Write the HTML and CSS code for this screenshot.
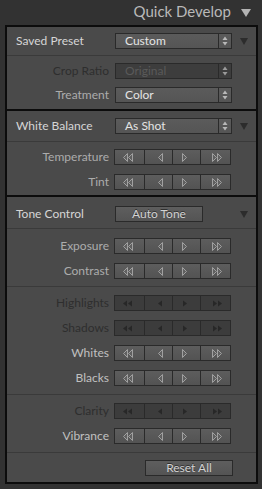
FILE: index.html
```html
<!DOCTYPE html>
<html>
<head>
<meta charset="utf-8">
<link rel="stylesheet" href="styles.css">
</head>
<body>
<svg class="sprite" aria-hidden="true">
  <defs>
    <symbol id="ell" viewBox="0 0 11 9"><polygon points="5.5,0.5 1.5,4.5 5.5,8.5"/><polygon points="10.5,0.5 6.5,4.5 10.5,8.5"/></symbol>
    <symbol id="el" viewBox="0 0 6 9"><polygon points="5.5,0.5 1.5,4.5 5.5,8.5"/></symbol>
    <symbol id="er" viewBox="0 0 6 9"><polygon points="0.5,0.5 4.5,4.5 0.5,8.5"/></symbol>
    <symbol id="err" viewBox="0 0 11 9"><polygon points="0.5,0.5 4.5,4.5 0.5,8.5"/><polygon points="5.5,0.5 9.5,4.5 5.5,8.5"/></symbol>
    <symbol id="dll" viewBox="0 0 11 9"><polygon points="5,1.5 1,4.5 5,7.5"/><polygon points="10,1.5 6,4.5 10,7.5"/></symbol>
    <symbol id="dl" viewBox="0 0 6 9"><polygon points="5,1.5 1,4.5 5,7.5"/></symbol>
    <symbol id="dr" viewBox="0 0 6 9"><polygon points="1,1.5 5,4.5 1,7.5"/></symbol>
    <symbol id="drr" viewBox="0 0 11 9"><polygon points="1,1.5 5,4.5 1,7.5"/><polygon points="6,1.5 10,4.5 6,7.5"/></symbol>
    <symbol id="spin" viewBox="0 0 6 10"><polygon points="0.5,4 3,0.5 5.5,4"/><polygon points="0.5,6 3,9.5 5.5,6"/></symbol>
    <symbol id="tri" viewBox="0 0 8 7"><polygon points="0,0 8,0 4,7"/></symbol>
  </defs>
</svg>

<div class="title">
  <span class="title-text">Quick Develop</span>
  <svg class="title-tri" viewBox="0 0 10 8"><polygon points="0,0 10,0 5,8"/></svg>
</div>

<div class="panel">
  <section class="sec sec1">
    <div class="shead">
      <span class="hlabel">Saved Preset</span>
      <div class="select"><span class="val">Custom</span><span class="spin"><svg class="spin-ico"><use href="#spin"/></svg></span></div>
      <svg class="stri"><use href="#tri"/></svg>
    </div>
    <div class="group g1a">
      <div class="row"><span class="lbl off">Crop Ratio</span><div class="select dis"><span class="val">Original</span><span class="spin"><svg class="spin-ico"><use href="#spin"/></svg></span></div></div>
      <div class="row"><span class="lbl">Treatment</span><div class="select"><span class="val">Color</span><span class="spin"><svg class="spin-ico"><use href="#spin"/></svg></span></div></div>
    </div>
  </section>

  <section class="sec sec2">
    <div class="shead">
      <span class="hlabel">White Balance</span>
      <div class="select"><span class="val">As Shot</span><span class="spin"><svg class="spin-ico"><use href="#spin"/></svg></span></div>
      <svg class="stri"><use href="#tri"/></svg>
    </div>
    <div class="group g2a">
      <div class="row"><span class="lbl">Temperature</span>
        <div class="bgroup"><span class="seg s1"><svg class="i2"><use href="#ell"/></svg></span><span class="seg s2"><svg class="i1"><use href="#el"/></svg></span><span class="seg s3"><svg class="i1"><use href="#er"/></svg></span><span class="seg s4"><svg class="i2"><use href="#err"/></svg></span></div>
      </div>
      <div class="row"><span class="lbl">Tint</span>
        <div class="bgroup"><span class="seg s1"><svg class="i2"><use href="#ell"/></svg></span><span class="seg s2"><svg class="i1"><use href="#el"/></svg></span><span class="seg s3"><svg class="i1"><use href="#er"/></svg></span><span class="seg s4"><svg class="i2"><use href="#err"/></svg></span></div>
      </div>
    </div>
  </section>

  <section class="sec sec3">
    <div class="shead">
      <span class="hlabel">Tone Control</span>
      <div class="btn">Auto Tone</div>
      <svg class="stri tone"><use href="#tri"/></svg>
    </div>
    <div class="group g3a">
      <div class="row"><span class="lbl">Exposure</span>
        <div class="bgroup"><span class="seg s1"><svg class="i2"><use href="#ell"/></svg></span><span class="seg s2"><svg class="i1"><use href="#el"/></svg></span><span class="seg s3"><svg class="i1"><use href="#er"/></svg></span><span class="seg s4"><svg class="i2"><use href="#err"/></svg></span></div>
      </div>
      <div class="row"><span class="lbl">Contrast</span>
        <div class="bgroup"><span class="seg s1"><svg class="i2"><use href="#ell"/></svg></span><span class="seg s2"><svg class="i1"><use href="#el"/></svg></span><span class="seg s3"><svg class="i1"><use href="#er"/></svg></span><span class="seg s4"><svg class="i2"><use href="#err"/></svg></span></div>
      </div>
    </div>
    <div class="group g3b">
      <div class="row"><span class="lbl off">Highlights</span>
        <div class="bgroup off"><span class="seg s1"><svg class="i2"><use href="#dll"/></svg></span><span class="seg s2"><svg class="i1"><use href="#dl"/></svg></span><span class="seg s3"><svg class="i1"><use href="#dr"/></svg></span><span class="seg s4"><svg class="i2"><use href="#drr"/></svg></span></div>
      </div>
      <div class="row"><span class="lbl off">Shadows</span>
        <div class="bgroup off"><span class="seg s1"><svg class="i2"><use href="#dll"/></svg></span><span class="seg s2"><svg class="i1"><use href="#dl"/></svg></span><span class="seg s3"><svg class="i1"><use href="#dr"/></svg></span><span class="seg s4"><svg class="i2"><use href="#drr"/></svg></span></div>
      </div>
      <div class="row"><span class="lbl hi">Whites</span>
        <div class="bgroup"><span class="seg s1"><svg class="i2"><use href="#ell"/></svg></span><span class="seg s2"><svg class="i1"><use href="#el"/></svg></span><span class="seg s3"><svg class="i1"><use href="#er"/></svg></span><span class="seg s4"><svg class="i2"><use href="#err"/></svg></span></div>
      </div>
      <div class="row"><span class="lbl hi">Blacks</span>
        <div class="bgroup"><span class="seg s1"><svg class="i2"><use href="#ell"/></svg></span><span class="seg s2"><svg class="i1"><use href="#el"/></svg></span><span class="seg s3"><svg class="i1"><use href="#er"/></svg></span><span class="seg s4"><svg class="i2"><use href="#err"/></svg></span></div>
      </div>
    </div>
    <div class="group g3c">
      <div class="row"><span class="lbl off">Clarity</span>
        <div class="bgroup off"><span class="seg s1"><svg class="i2"><use href="#dll"/></svg></span><span class="seg s2"><svg class="i1"><use href="#dl"/></svg></span><span class="seg s3"><svg class="i1"><use href="#dr"/></svg></span><span class="seg s4"><svg class="i2"><use href="#drr"/></svg></span></div>
      </div>
      <div class="row"><span class="lbl hi">Vibrance</span>
        <div class="bgroup"><span class="seg s1"><svg class="i2"><use href="#ell"/></svg></span><span class="seg s2"><svg class="i1"><use href="#el"/></svg></span><span class="seg s3"><svg class="i1"><use href="#er"/></svg></span><span class="seg s4"><svg class="i2"><use href="#err"/></svg></span></div>
      </div>
    </div>
    <div class="group g3d">
      <div class="resetrow"><div class="btn">Reset All</div></div>
    </div>
  </section>
</div>
</body>
</html>
```

FILE: styles.css
```css
* { box-sizing: border-box; }
html, body { margin: 0; padding: 0; }
body {
  background: #323232;
  font-family: Lato, "Open Sans", sans-serif;
  width: 262px;
  height: 489px;
  overflow: hidden;
}
.sprite { position: absolute; width: 0; height: 0; overflow: hidden; }

.title {
  height: 25px;
  display: flex;
  align-items: flex-start;
  justify-content: flex-end;
  padding-right: 11px;
  color: #b9b9b9;
}
.title-text {
  font-size: 15px;
  line-height: 18px;
  padding-top: 2px;
}
.title-tri {
  width: 10px;
  height: 8px;
  margin-top: 9px;
  margin-left: 10px;
  fill: #b3b3b3;
}

.panel {
  margin-left: 5px;
  width: 253px;
  border: 2px solid #0c0c0c;
  background: #4a4a4a;
}
.sec + .sec { border-top: 2px solid #0c0c0c; }

.shead {
  display: flex;
  align-items: center;
  padding: 6px 0 6px 9px;
}
.sec2 .shead { padding: 7px 0 7px 9px; }
.sec3 .shead { padding: 9px 0 6px 9px; }
.hlabel {
  width: 99px;
  color: #d6d6d6;
  font-size: 12px;
  line-height: 16px;
}
.stri {
  width: 8px;
  height: 7px;
  margin-left: 8px;
  fill: #2c2c2c;
}
.stri.tone { margin-left: 37px; }

.group {
  border-top: 1px solid #3a3a3a;
  display: flex;
  flex-direction: column;
  gap: 9px;
  padding: 8px 0;
}
.g1a { gap: 8px; padding: 7px 0 6px; }
.g2a { padding: 7px 0 5px; }
.g3a { padding: 9px 0 7px; }
.g3b { padding: 8px 0 8px; }
.g3c { padding: 8px 0 8px; }
.g3d { padding: 7px 0 6px; }

.row {
  display: flex;
  align-items: center;
  height: 16px;
}
.lbl {
  width: 102px;
  text-align: right;
  font-size: 12px;
  line-height: 16px;
  color: #acacac;
}
.lbl.hi { color: #c0c0c0; }
.lbl.off { color: #2e2e2e; }

.select {
  width: 117px;
  height: 16px;
  border: 1px solid #2a2a2a;
  background: linear-gradient(#5b5b5b, #555555);
  display: flex;
  color: #e4e4e4;
  font-size: 12px;
  line-height: 14px;
}
.row .select { margin-left: 6px; }
.select .val {
  width: 102px;
  padding-left: 9px;
}
.select .spin {
  width: 13px;
  border-left: 1px solid #2a2a2a;
  display: flex;
  align-items: center;
  justify-content: center;
}
.spin-ico { width: 6px; height: 10px; fill: #b8b8b8; }
.select.dis { background: #3d3d3d; color: #5a5a5a; }
.select.dis .spin-ico { fill: #9a9a9a; }

.bgroup {
  margin-left: 5px;
  width: 117px;
  height: 16px;
  display: flex;
  border: 1px solid #2a2a2a;
  background: linear-gradient(#5d5d5d, #535353);
}
.bgroup.off { background: #3c3c3c; }
.seg {
  display: flex;
  align-items: center;
  justify-content: flex-start;
}
.seg + .seg { border-left: 1px solid #2a2a2a; }
.s1 { width: 29px; padding-left: 7px; }
.s2 { width: 28px; padding-left: 12px; }
.s3 { width: 28px; padding-left: 9px; }
.s4 { width: 30px; padding-left: 11px; }
.i2 { width: 11px; height: 9px; }
.i1 { width: 6px; height: 9px; }
.bgroup svg { fill: #606060; stroke: #a0a0a0; stroke-width: 1; }
.bgroup.off svg { fill: #272727; stroke: none; }

.btn {
  width: 88px;
  height: 16px;
  border: 1px solid #2a2a2a;
  background: linear-gradient(#5e5e5e, #545454);
  color: #d2d2d2;
  font-size: 12px;
  line-height: 14px;
  text-align: center;
  text-shadow: 0 -1px 0 #303030;
}
.resetrow {
  display: flex;
  height: 16px;
  padding-left: 138px;
}
```
